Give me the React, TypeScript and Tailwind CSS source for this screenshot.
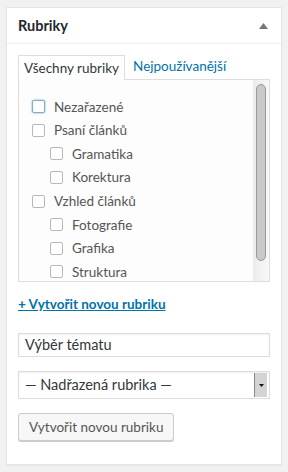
import React from "react"

const cats: { name: string; level: number; focus?: boolean }[] = [
  { name: "Nezařazené", level: 0, focus: true },
  { name: "Psaní článků", level: 0 },
  { name: "Gramatika", level: 1 },
  { name: "Korektura", level: 1 },
  { name: "Vzhled článků", level: 0 },
  { name: "Fotografie", level: 1 },
  { name: "Grafika", level: 1 },
  { name: "Struktura", level: 1 },
]

function Box({ focus }: { focus?: boolean }) {
  return (
    <span
      className={`inline-block w-[13px] h-[13px] shrink-0 rounded-[2px] border bg-white ${
        focus ? "border-[#8fa9c4] shadow-[0_0_2px_rgba(30,140,190,0.8)]" : "border-[#b4b9be]"
      }`}
    />
  )
}

export default function App() {
  return (
    <div
      className="w-[288px] h-[472px] bg-[#f1f1f1] pt-[7px] px-[6px] text-[13.5px]"
      style={{ fontFamily: 'Lato, "Noto Sans", sans-serif' }}
    >
      <div className="bg-white border border-[#e5e5e5] shadow-[0_1px_1px_rgba(0,0,0,0.04)] h-[458px]">
        {/* header */}
        <div className="flex items-center justify-between h-[36px] px-[11px] border-b border-[#eeeeee]">
          <span className="text-[14.5px] font-bold text-[#23282d]">Rubriky</span>
          <svg width="9" height="6" viewBox="0 0 9 6" className="mr-[2px]">
            <path d="M4.5 0 L9 6 L0 6 Z" fill="#72777c" />
          </svg>
        </div>

        <div className="px-[11px] pt-[10px]">
          {/* tabs */}
          <div className="flex items-end h-[25px]">
            <div className="h-[25px] px-[5px] flex items-center border border-b-0 border-[#dddddd] bg-white text-[#32373c] relative top-[1px]">
              Všechny rubriky
            </div>
            <div className="h-[25px] px-[8px] flex items-center text-[#0073aa]">Nejpoužívanější</div>
          </div>

          {/* list */}
          <div className="flex h-[203px] border border-[#dddddd] bg-[#fdfdfd]">
            <div className="flex-1 pl-[13px] pt-[15px] text-[#555555]">
              {cats.map((c) => (
                <div
                  key={c.name}
                  className={`flex items-center h-[23.6px] gap-[9px] ${c.level ? "pl-[18px]" : ""}`}
                >
                  <Box focus={c.focus} />
                  <span>{c.name}</span>
                </div>
              ))}
            </div>
            <div className="w-[16px] bg-gradient-to-r from-[#ececec] to-[#f8f8f8] pt-[4px] flex justify-center">
              <div className="w-[10px] h-[177px] rounded-full border border-[#9a9a9a] bg-[#c9c9c9]" />
            </div>
          </div>

          {/* add new link */}
          <div className="mt-[14px] h-[16px] flex items-center">
            <a href="#" className="font-bold text-[#0073aa] underline leading-[16px] block">
              + Vytvořit novou rubriku
            </a>
          </div>

          {/* inputs */}
          <div className="mt-[21px] h-[24px] border border-[#dddddd] bg-white flex items-center px-[6px] text-[#32373c] text-[14.5px] shadow-[inset_0_1px_2px_rgba(0,0,0,0.07)]">
            Výběr tématu
          </div>

          <div className="mt-[14px] h-[28px] border border-[#dddddd] bg-white flex items-center text-[#32373c] text-[14.5px] shadow-[inset_0_1px_2px_rgba(0,0,0,0.07)]">
            <span className="flex-1 px-[6px]">— Nadřazená rubrika —</span>
            <div className="w-[13px] h-[24px] mr-[2px] bg-[#d4d4d4] border-l border-[#888] flex items-center justify-center">
              <svg width="5" height="3" viewBox="0 0 5 3">
                <path d="M0 0 L5 0 L2.5 3 Z" fill="#111" />
              </svg>
            </div>
          </div>

          <button className="mt-[14px] h-[28px] px-[10px] rounded-[3px] border border-[#cccccc] bg-[#f7f7f7] text-[#555555] shadow-[0_1px_0_#cccccc]">
            Vytvořit novou rubriku
          </button>
        </div>
      </div>
    </div>
  )
}
